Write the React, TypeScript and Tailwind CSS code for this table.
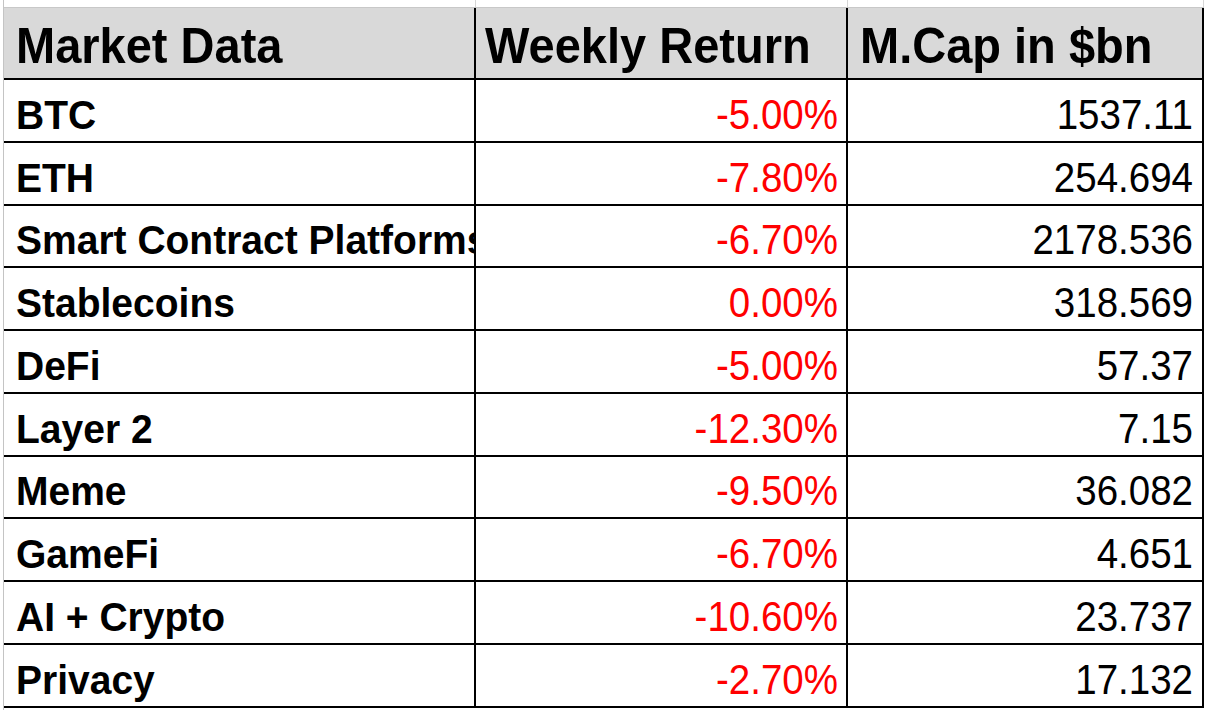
import React from 'react';

const rows = [
  { name: 'BTC', ret: '-5.00%', cap: '1537.11', h: 'h-[63px]' },
  { name: 'ETH', ret: '-7.80%', cap: '254.694', h: 'h-[63px]' },
  { name: 'Smart Contract Platforms', ret: '-6.70%', cap: '2178.536', h: 'h-[62px]' },
  { name: 'Stablecoins', ret: '0.00%', cap: '318.569', h: 'h-[63px]' },
  { name: 'DeFi', ret: '-5.00%', cap: '57.37', h: 'h-[63px]' },
  { name: 'Layer 2', ret: '-12.30%', cap: '7.15', h: 'h-[63px]' },
  { name: 'Meme', ret: '-9.50%', cap: '36.082', h: 'h-[62px]' },
  { name: 'GameFi', ret: '-6.70%', cap: '4.651', h: 'h-[63px]' },
  { name: 'AI + Crypto', ret: '-10.60%', cap: '23.737', h: 'h-[63px]' },
  { name: 'Privacy', ret: '-2.70%', cap: '17.132', h: 'h-[63px]' },
];

const cols = 'grid grid-cols-[472px_372px_356px]';

export default function App() {
  return (
    <div className="w-[1208px] h-[710px] bg-white overflow-hidden flex font-['Liberation_Sans',Arial,sans-serif] text-black">
      <div className="w-[3px] shrink-0" />
      <div className="flex flex-col border-l border-[#c4c4c4]">
        {/* gridline strip above the table */}
        <div className={`${cols} h-[8px] border-b border-[#c8c8c8]`}>
          <div className="border-r border-[#d6d6d6]" />
          <div className="border-r border-[#d6d6d6]" />
          <div className="border-r border-[#d6d6d6]" />
        </div>

        {/* header */}
        <div className={`${cols} h-[72px] bg-[#d9d9d9] text-[47px] font-bold leading-none`}>
          <div className="border-b-2 border-r-2 border-black flex items-end pl-[12px] pb-[9px] whitespace-nowrap overflow-hidden">
            <span className="inline-block scale-y-[1.05]">Market Data</span>
          </div>
          <div className="border-b-2 border-r-2 border-black flex items-end pl-[9px] pb-[9px] whitespace-nowrap overflow-hidden">
            <span className="inline-block scale-y-[1.05]">Weekly Return</span>
          </div>
          <div className="border-b-2 border-r-2 border-black flex items-end pl-[12px] pb-[9px] whitespace-nowrap overflow-hidden">
            <span className="inline-block scale-y-[1.05]">M.Cap in $bn</span>
          </div>
        </div>

        {/* body */}
        {rows.map((r) => (
          <div key={r.name} className={`${cols} ${r.h} leading-none`}>
            <div className="border-b-2 border-r-2 border-black flex items-end pl-[12px] pb-[7px] text-[39px] font-bold whitespace-nowrap overflow-hidden">
              <span className="inline-block scale-y-[1.05]">{r.name}</span>
            </div>
            <div className="border-b-2 border-r-2 border-black flex items-end justify-end pr-[8px] pb-[7px] text-[38.5px] text-[#ff0000]">
              <span className="inline-block scale-y-[1.08]">{r.ret}</span>
            </div>
            <div className="border-b-2 border-r-2 border-black flex items-end justify-end pr-[9px] pb-[7px] text-[38.5px]">
              <span className="inline-block scale-y-[1.08]">{r.cap}</span>
            </div>
          </div>
        ))}
      </div>
    </div>
  );
}
